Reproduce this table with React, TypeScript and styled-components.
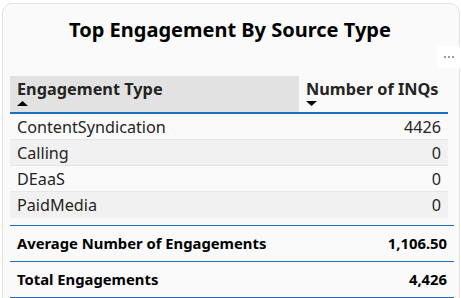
import React from "react";
import styled, { createGlobalStyle } from "styled-components";

const GlobalStyle = createGlobalStyle`
  html, body { margin: 0; padding: 0; background: #ffffff; }
  body { font-family: "Noto Sans", "Open Sans", sans-serif; overflow: hidden; }
`;

const Page = styled.div`
  width: 461px;
  height: 298px;
  overflow: hidden;
  position: relative;
`;

const Card = styled.div`
  position: relative;
  margin: 3px 0 0 2px;
  width: 458px;
  height: 310px;
  box-sizing: border-box;
  background: #fafafa;
  border: 1px solid #e4e4e4;
  border-radius: 10px;
  padding: 0 0 0 7px;
`;

const Title = styled.h1`
  margin: 0;
  height: 72px;
  padding-top: 12px;
  box-sizing: border-box;
  text-align: center;
  font-size: 20px;
  font-weight: 700;
  color: #000;
  line-height: 27px;
  padding-right: 9px;
`;

const MoreButton = styled.div`
  position: absolute;
  top: 42px;
  right: -2px;
  width: 24px;
  height: 22px;
  background: #ffffff;
  display: flex;
  align-items: center;
  justify-content: center;
  gap: 2px;
`;

const Dot = styled.span`
  width: 2px;
  height: 2px;
  background: #9a9a9a;
`;

const Table = styled.div`
  width: 438px;
`;

const HeaderRow = styled.div`
  display: grid;
  grid-template-columns: 289px 149px;
  height: 38px;
  border-bottom: 2px solid #1a6fbf;
  box-sizing: border-box;
`;

const HeaderCell = styled.div<{ $shaded?: boolean }>`
  background: ${(p) => (p.$shaded ? "#e2e2e2" : "transparent")};
  padding: 3px 7px 0 7px;
  font-size: 16.3px;
  font-weight: 700;
  color: #252423;
  line-height: 20px;
  white-space: nowrap;
  display: flex;
  flex-direction: column;
`;

const SortArrow = styled.svg`
  display: block;
  margin-top: 2px;
`;

const BodyRow = styled.div<{ $alt?: boolean; $last?: boolean }>`
  display: grid;
  grid-template-columns: 289px 149px;
  height: 26px;
  box-sizing: border-box;
  background: ${(p) => (p.$alt ? "#f1f1f1" : "#fafafa")};
  border-bottom: ${(p) => (p.$last ? "none" : "1px solid #e6e6e6")};
  align-items: center;
  font-size: 16.2px;
  color: #252423;
`;

const Cell = styled.div<{ $right?: boolean }>`
  padding: 0 7px;
  text-align: ${(p) => (p.$right ? "right" : "left")};
  white-space: nowrap;
  line-height: 20px;
`;

const Totals = styled.div`
  width: 444px;
  margin-top: 7px;
  border-top: 1px solid #1a6fbf;
`;

const TotalRow = styled.div`
  display: flex;
  justify-content: space-between;
  align-items: center;
  height: 36px;
  box-sizing: border-box;
  border-bottom: 1px solid #1a6fbf;
  padding: 0 7px 1px 7px;
  font-size: 14.8px;
  font-weight: 700;
  color: #000;
`;

const rows = [
  { name: "ContentSyndication", value: "4426" },
  { name: "Calling", value: "0" },
  { name: "DEaaS", value: "0" },
  { name: "PaidMedia", value: "0" },
];

export default function App() {
  return (
    <Page>
      <GlobalStyle />
      <Card>
        <Title>Top Engagement By Source Type</Title>
        <MoreButton>
          <Dot />
          <Dot />
          <Dot />
        </MoreButton>
        <Table>
          <HeaderRow>
            <HeaderCell $shaded>
              Engagement Type
              <SortArrow width="11" height="5" viewBox="0 0 11 5">
                <polygon points="5.5,0 11,5 0,5" fill="#000" />
              </SortArrow>
            </HeaderCell>
            <HeaderCell>
              Number of INQs
              <SortArrow width="11" height="5" viewBox="0 0 11 5">
                <polygon points="0,0 11,0 5.5,5" fill="#000" />
              </SortArrow>
            </HeaderCell>
          </HeaderRow>
          {rows.map((r, i) => (
            <BodyRow key={r.name} $alt={i % 2 === 1} $last={i === rows.length - 1}>
              <Cell>{r.name}</Cell>
              <Cell $right>{r.value}</Cell>
            </BodyRow>
          ))}
        </Table>
        <Totals>
          <TotalRow>
            <span>Average Number of Engagements</span>
            <span>1,106.50</span>
          </TotalRow>
          <TotalRow>
            <span>Total Engagements</span>
            <span>4,426</span>
          </TotalRow>
        </Totals>
      </Card>
    </Page>
  );
}
